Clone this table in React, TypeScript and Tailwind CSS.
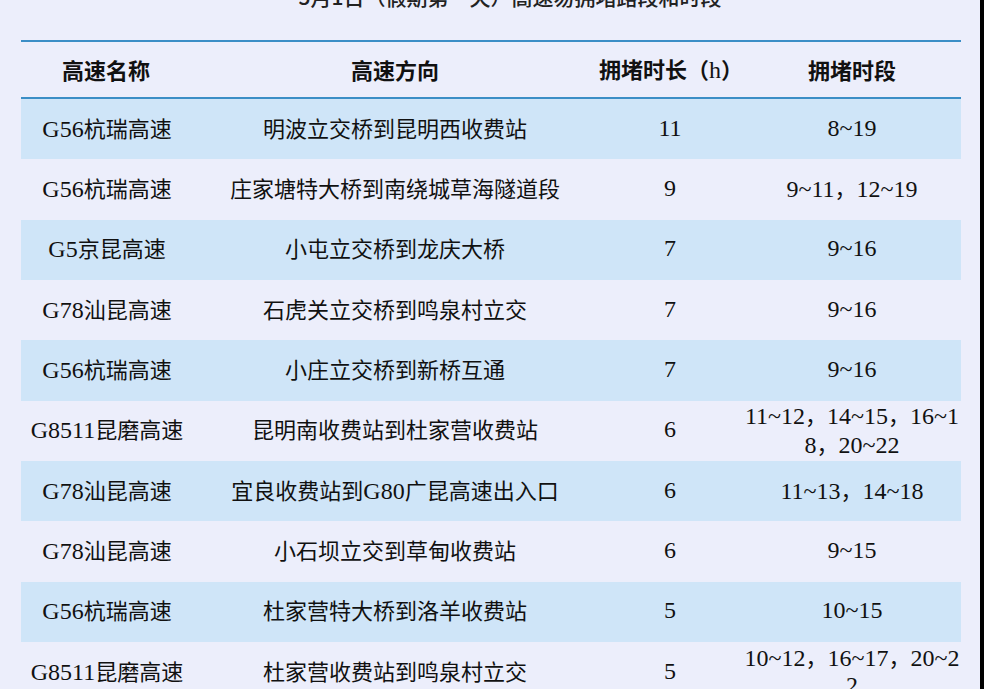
import React from 'react'

type Row = { name: string; dir: string; hours: string; period: string[] }

const rows: Row[] = [
  { name: 'G56杭瑞高速', dir: '明波立交桥到昆明西收费站', hours: '11', period: ['8~19'] },
  { name: 'G56杭瑞高速', dir: '庄家塘特大桥到南绕城草海隧道段', hours: '9', period: ['9~11，12~19'] },
  { name: 'G5京昆高速', dir: '小屯立交桥到龙庆大桥', hours: '7', period: ['9~16'] },
  { name: 'G78汕昆高速', dir: '石虎关立交桥到鸣泉村立交', hours: '7', period: ['9~16'] },
  { name: 'G56杭瑞高速', dir: '小庄立交桥到新桥互通', hours: '7', period: ['9~16'] },
  { name: 'G8511昆磨高速', dir: '昆明南收费站到杜家营收费站', hours: '6', period: ['11~12，14~15，16~1', '8，20~22'] },
  { name: 'G78汕昆高速', dir: '宜良收费站到G80广昆高速出入口', hours: '6', period: ['11~13，14~18'] },
  { name: 'G78汕昆高速', dir: '小石坝立交到草甸收费站', hours: '6', period: ['9~15'] },
  { name: 'G56杭瑞高速', dir: '杜家营特大桥到洛羊收费站', hours: '5', period: ['10~15'] },
  { name: 'G8511昆磨高速', dir: '杜家营收费站到鸣泉村立交', hours: '5', period: ['10~12，16~17，20~2', '2'] },
]

const cols = 'grid grid-cols-[172px_404px_146px_218px]'

// latin runs are set in a larger serif, CJK runs in the sans at 22px
function Mixed({ text }: { text: string }) {
  const parts = text.split(/([A-Za-z0-9~]+)/).filter(Boolean)
  return (
    <>
      {parts.map((p, i) =>
        /^[A-Za-z0-9~]+$/.test(p) ? (
          <span key={i} className="font-['Liberation_Serif',serif] text-[24px]">{p}</span>
        ) : (
          <span key={i} className="font-['Noto_Sans_CJK_SC',sans-serif] text-[22px]">{p}</span>
        ),
      )}
    </>
  )
}

export default function App() {
  return (
    <div className="flex h-[689px] w-[984px] overflow-hidden bg-[#eceefb] text-[#111]">
      <div className="flex-1">
        {/* title is cut off by the top of the shot */}
        <div className="-mt-[16px] h-[24px] pl-[40px] text-center font-['Noto_Sans_CJK_SC',sans-serif] text-[21px] font-medium leading-[24px] text-[#222]">
          5月1日（假期第一天）高速易拥堵路段和时段
        </div>

        <div className="ml-[21px] mt-[32px] w-[940px]">
          <div className={`${cols} h-[59px] items-center whitespace-nowrap border-y-[2px] border-[#3b8ec6] font-['Noto_Sans_CJK_SC',sans-serif] text-[22px] font-bold`}>
            <div className="text-center pr-[2px]">高速名称</div>
            <div className="text-center">高速方向</div>
            <div className="text-center pl-[2px]">
              拥堵时长（<span className="font-['Liberation_Serif',serif] text-[24px] font-normal">h</span>）
            </div>
            <div className="text-center">拥堵时段</div>
          </div>

          {rows.map((r, i) => (
            <div
              key={i}
              className={`${cols} h-[60.33px] items-center leading-[25px] ${i % 2 === 0 ? 'bg-[#cfe5f8]' : ''}`}
            >
              <div className="text-center"><Mixed text={r.name} /></div>
              <div className="text-center"><Mixed text={r.dir} /></div>
              <div className="text-center"><Mixed text={r.hours} /></div>
              <div className="flex flex-col items-center whitespace-nowrap">
                {r.period.map((line, j) => (
                  <div key={j}><Mixed text={line} /></div>
                ))}
              </div>
            </div>
          ))}
        </div>
      </div>
      <div className="w-[4px] bg-black" />
    </div>
  )
}
